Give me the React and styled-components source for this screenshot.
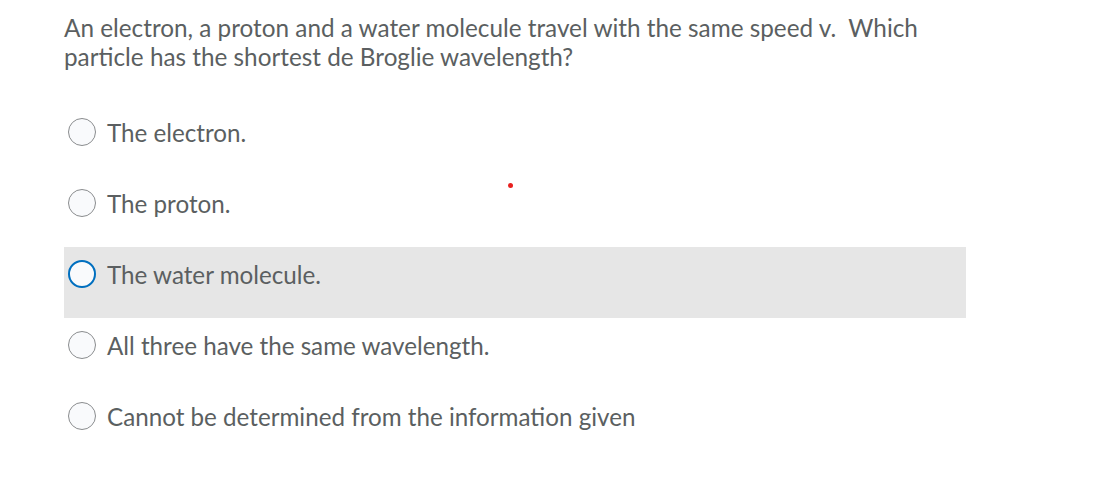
import React from "react";
import styled, { createGlobalStyle } from "styled-components";

const GlobalStyle = createGlobalStyle`
  body {
    margin: 0;
    background: #ffffff;
    font-family: Lato, "Open Sans", sans-serif;
  }
`;

const options = [
  "The electron.",
  "The proton.",
  "The water molecule.",
  "All three have the same wavelength.",
  "Cannot be determined from the information given",
];

function Quiz() {
  const focused = 2;

  return (
    <Page>
      <Question>
        An electron, a proton and a water molecule travel with the same speed v.&nbsp; Which
        <br />
        particle has the shortest de Broglie wavelength?
      </Question>
      <Options>
        {options.map((text, i) => (
          <Option key={text} $active={i === focused}>
            <Radio $active={i === focused} />
            <Label>{text}</Label>
          </Option>
        ))}
      </Options>
      <Dot />
    </Page>
  );
}

const Page = styled.div`
  position: relative;
  width: 1097px;
  height: 485px;
  padding: 13px 0 0 64px;
  box-sizing: border-box;
  color: #5b5f61;
`;

const Question = styled.div`
  font-size: 24.3px;
  line-height: 29px;
  margin-bottom: 34px;
`;

const Options = styled.div`
  display: flex;
  flex-direction: column;
  width: 902px;
`;

const Option = styled.div`
  display: flex;
  align-items: flex-start;
  gap: 11px;
  height: 71px;
  box-sizing: border-box;
  padding: 13px 0 0 4px;
  background: ${(p) => (p.$active ? "#e6e6e6" : "transparent")};
`;

const Radio = styled.span`
  flex: none;
  width: 28px;
  height: 28px;
  margin-top: 0;
  border-radius: 50%;
  box-sizing: border-box;
  background: #f9fafc;
  border: ${(p) => (p.$active ? "2px solid #006fbf" : "1px solid #8a8c8e")};
`;

const Label = styled.span`
  font-size: 24.2px;
  line-height: 29px;
`;

const Dot = styled.span`
  position: absolute;
  left: 508px;
  top: 183px;
  width: 5px;
  height: 5px;
  border-radius: 50%;
  background: #e8201f;
`;

export default function App() {
  return (
    <>
      <GlobalStyle />
      <Quiz />
    </>
  );
}
